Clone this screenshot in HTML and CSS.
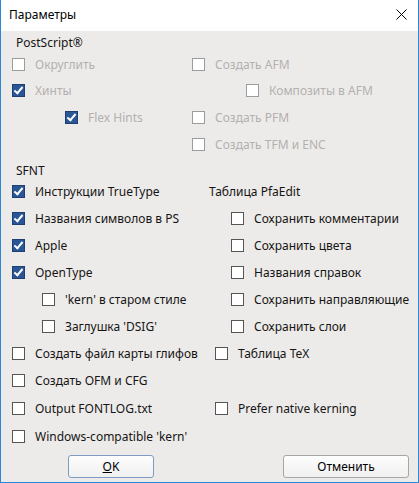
FILE: index.html
```html
<!DOCTYPE html>
<html lang="ru">
<head>
  <meta charset="UTF-8">
  <title>Параметры</title>
  <link rel="stylesheet" href="styles.css">
</head>
<body>
  <div class="window">
    <div class="titlebar">
      <span class="title">Параметры</span>
      <svg class="close" width="11" height="11" viewBox="0 0 11 11">
        <path d="M0.5 0.5 L10.5 10.5 M10.5 0.5 L0.5 10.5" stroke="#000" stroke-width="1"/>
      </svg>
    </div>

    <div class="content">
      <div class="group-title">PostScript®</div>
      <div class="ps">
        <div class="row">
          <div class="cell left"><span class="box disabled"></span><span class="label dim">Округлить</span></div>
          <div class="cell"><span class="box disabled"></span><span class="label dim">Создать AFM</span></div>
        </div>
        <div class="row">
          <div class="cell left"><span class="box checked"></span><span class="label dim">Хинты</span></div>
          <div class="cell indent"><span class="box disabled"></span><span class="label dim">Композиты в AFM</span></div>
        </div>
        <div class="row">
          <div class="cell left indent"><span class="box checked"></span><span class="label dim">Flex Hints</span></div>
          <div class="cell"><span class="box disabled"></span><span class="label dim">Создать PFM</span></div>
        </div>
        <div class="row">
          <div class="cell left"></div>
          <div class="cell"><span class="box disabled"></span><span class="label dim">Создать TFM и ENC</span></div>
        </div>
      </div>

      <div class="group-title sfnt">SFNT</div>
      <div class="sfnt-rows">
        <div class="row">
          <div class="cell wide"><span class="box checked"></span><span class="label">Инструкции TrueType</span></div>
          <div class="cell"><span class="label">Таблица PfaEdit</span></div>
        </div>
        <div class="row">
          <div class="cell wide"><span class="box checked"></span><span class="label">Названия символов в PS</span></div>
          <div class="cell sub"><span class="box"></span><span class="label">Сохранить комментарии</span></div>
        </div>
        <div class="row">
          <div class="cell wide"><span class="box checked"></span><span class="label">Apple</span></div>
          <div class="cell sub"><span class="box"></span><span class="label">Сохранить цвета</span></div>
        </div>
        <div class="row">
          <div class="cell wide"><span class="box checked"></span><span class="label">OpenType</span></div>
          <div class="cell sub"><span class="box"></span><span class="label">Названия справок</span></div>
        </div>
        <div class="row">
          <div class="cell wide nested"><span class="box"></span><span class="label">'kern' в старом стиле</span></div>
          <div class="cell sub"><span class="box"></span><span class="label">Сохранить направляющие</span></div>
        </div>
        <div class="row">
          <div class="cell wide nested"><span class="box"></span><span class="label">Заглушка 'DSIG'</span></div>
          <div class="cell sub"><span class="box"></span><span class="label">Сохранить слои</span></div>
        </div>
        <div class="row">
          <div class="cell wide"><span class="box"></span><span class="label">Создать файл карты глифов</span></div>
          <div class="cell near"><span class="box"></span><span class="label">Таблица TeX</span></div>
        </div>
        <div class="row">
          <div class="cell wide"><span class="box"></span><span class="label">Создать OFM и CFG</span></div>
        </div>
        <div class="row tall">
          <div class="cell wide"><span class="box"></span><span class="label">Output FONTLOG.txt</span></div>
          <div class="cell near"><span class="box"></span><span class="label">Prefer native kerning</span></div>
        </div>
        <div class="row last">
          <div class="cell wide"><span class="box"></span><span class="label">Windows-compatible 'kern'</span></div>
        </div>
      </div>

      <div class="buttons">
        <button class="btn default"><u>O</u>K</button>
        <button class="btn cancel">Отменить</button>
      </div>
    </div>
  </div>
</body>
</html>
```

FILE: styles.css
```css
html, body {
  margin: 0;
  padding: 0;
}

body {
  font-family: 'Noto Sans', sans-serif;
  font-size: 12px;
  color: #151515;
  background: #edebe9;
}

.window {
  width: 419px;
  height: 483px;
  box-sizing: border-box;
  border: 1px solid #2b88d8;
  border-top: none;
  background: #edebe9;
  display: flex;
  flex-direction: column;
}

.titlebar {
  height: 31px;
  background: #fff;
  display: flex;
  align-items: center;
  justify-content: space-between;
  padding: 0 10px 2px 8px;
  box-sizing: border-box;
}

.title {
  color: #000;
}

.close {
  display: block;
  margin-right: 1px;
}

.content {
  padding: 4px 0 0 11px;
  flex: 1;
  display: flex;
  flex-direction: column;
}

.group-title {
  height: 16px;
  line-height: 16px;
  padding-left: 4px;
}

.group-title.sfnt {
  margin-top: 6px;
  height: 14px;
  line-height: 14px;
}

.row {
  display: flex;
  align-items: center;
  height: 27px;
}

.ps .row {
  height: 26.67px;
}

.row.tall {
  height: 29px;
}

.row.last {
  height: 28px;
}

.cell {
  display: flex;
  align-items: center;
  white-space: nowrap;
}

.cell.left {
  width: 180px;
  flex: none;
}

.cell.indent {
  padding-left: 54px;
}

.cell.left.indent {
  width: 127px;
  padding-left: 53px;
}

.cell.wide {
  width: 197px;
  flex: none;
}

.cell.nested {
  width: 167px;
  padding-left: 30px;
}

.cell.sub {
  padding-left: 22px;
}

.cell.near {
  padding-left: 6px;
}

.box {
  width: 13px;
  height: 13px;
  box-sizing: border-box;
  border: 1px solid #555;
  background: #fff;
  margin-right: 10px;
  flex: none;
  position: relative;
}

.box.disabled {
  border-color: #9c9c9c;
}

.box.checked {
  background: #2a5696;
  border-color: #1d3f73;
}

.box.checked::after {
  content: "";
  position: absolute;
  left: 3px;
  top: 0px;
  width: 3px;
  height: 7px;
  border: solid #fff;
  border-width: 0 2px 2px 0;
  transform: rotate(40deg);
}

.label.dim {
  color: #b3b0b0;
}

.buttons {
  display: flex;
  padding-top: 4px;
  padding-left: 56px;
}

.btn {
  font-family: 'Noto Sans', sans-serif;
  font-size: 12px;
  color: #000;
  height: 23px;
  padding: 0;
  border: 1px solid #a6a6a6;
  border-radius: 3px;
  background: linear-gradient(#fdfdfd, #f0f0f0);
}

.btn.default {
  width: 86px;
  border-color: #7e9bc4;
}

.btn.cancel {
  width: 126px;
  margin-left: 129px;
}
```
